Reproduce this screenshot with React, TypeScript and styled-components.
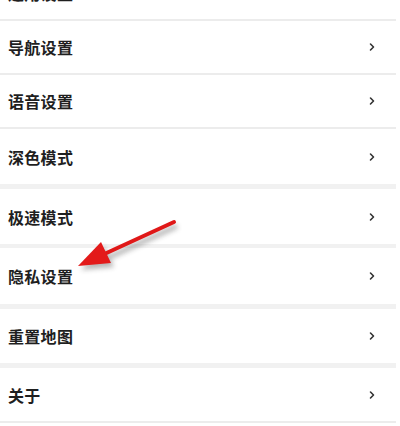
import React from "react";
import styled, { createGlobalStyle } from "styled-components";

const GlobalStyle = createGlobalStyle`
  html, body {
    margin: 0;
    padding: 0;
    background: #ffffff;
  }
  body {
    font-family: "Noto Sans CJK SC", "Noto Sans", sans-serif;
    color: #1c1c1c;
  }
`;

const Page = styled.div`
  position: relative;
  width: 400px;
  height: 426px;
  overflow: hidden;
  background: #ffffff;
`;

const List = styled.div`
  display: flex;
  flex-direction: column;
`;

const Row = styled.div<{ $h: number; $clip?: boolean }>`
  height: ${(p) => p.$h}px;
  display: flex;
  align-items: ${(p) => (p.$clip ? "flex-end" : "center")};
  justify-content: space-between;
  padding: ${(p) => (p.$clip ? "0 24px 18px 8px" : "0 24px 0 8px")};
  box-sizing: border-box;
  overflow: hidden;
`;

const Label = styled.span`
  font-size: 16px;
  font-weight: 700;
  letter-spacing: 0.3px;
  line-height: 16px;
  color: #1f1f1f;
`;

const Divider = styled.div<{ $size: number }>`
  height: ${(p) => p.$size}px;
  margin-right: 4px;
  background: ${(p) => (p.$size > 2 ? "#f1f1f1" : "#ececec")};
`;

const Chevron = () => (
  <svg width="8" height="10" viewBox="0 0 8 10">
    <path
      d="M2.5 2 L5.5 5 L2.5 8"
      fill="none"
      stroke="#333"
      strokeWidth="1.6"
      strokeLinecap="round"
      strokeLinejoin="round"
    />
  </svg>
);

const Overlay = styled.svg`
  position: absolute;
  left: 0;
  top: 0;
  pointer-events: none;
`;

const items = [
  { label: "通用设置", h: 19, div: 2, clip: true },
  { label: "导航设置", h: 52, div: 2 },
  { label: "语音设置", h: 52, div: 2 },
  { label: "深色模式", h: 55, div: 5 },
  { label: "极速模式", h: 55, div: 4 },
  { label: "隐私设置", h: 56, div: 5 },
  { label: "重置地图", h: 54, div: 5 },
  { label: "关于", h: 53, div: 2 },
];

export default function App() {
  return (
    <Page>
      <GlobalStyle />
      <List>
        {items.map((it) => (
          <React.Fragment key={it.label}>
            <Row $h={it.h} $clip={it.clip}>
              <Label>{it.label}</Label>
              <Chevron />
            </Row>
            <Divider $size={it.div} />
          </React.Fragment>
        ))}
      </List>
      <Overlay width="400" height="426" viewBox="0 0 400 426">
        <defs>
          <filter id="sh" x="-20%" y="-20%" width="140%" height="140%">
            <feGaussianBlur stdDeviation="2.5" />
          </filter>
        </defs>
        <g opacity="0.35" filter="url(#sh)" transform="translate(3 4)">
          <line x1="174" y1="222" x2="100" y2="256" stroke="#333" strokeWidth="5" />
          <polygon points="78,266 101,242 111,263" fill="#333" />
        </g>
        <line
          x1="174"
          y1="222"
          x2="100"
          y2="256"
          stroke="#e01818"
          strokeWidth="4"
          strokeLinecap="round"
        />
        <polygon points="78,266 101,242 111,263" fill="#e31a1a" />
      </Overlay>
    </Page>
  );
}
